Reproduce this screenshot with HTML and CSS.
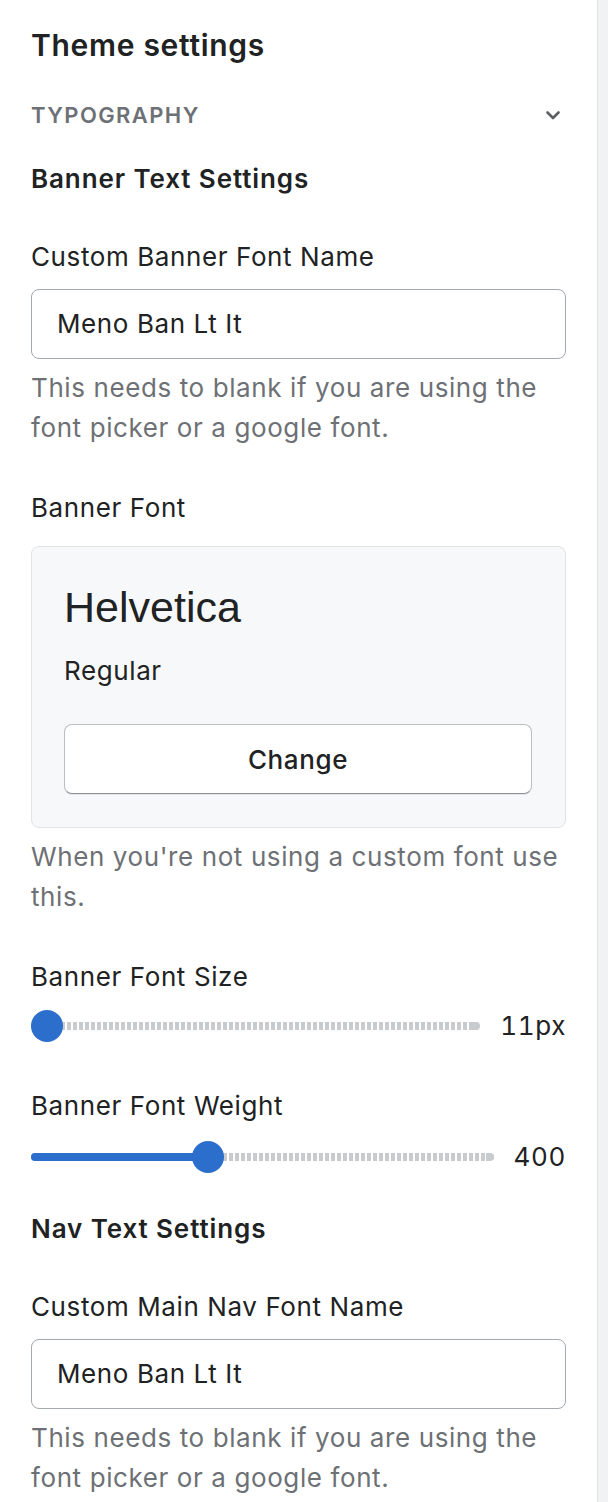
FILE: index.html
```html
<!DOCTYPE html>
<html lang="en">
<head>
<meta charset="utf-8">
<title>Theme settings</title>
<link rel="stylesheet" href="styles.css">
</head>
<body>
<div class="page">
  <aside class="panel">
    <h1 class="title">Theme settings</h1>
    <div class="section-head">
      <span class="section-name">TYPOGRAPHY</span>
      <svg class="chevron" width="20" height="20" viewBox="0 0 20 20" aria-hidden="true">
        <path d="M4.5 7.5 10 13l5.5-5.5" fill="none" stroke="#5c5f62" stroke-width="2.6" stroke-linecap="round" stroke-linejoin="round"/>
      </svg>
    </div>

    <h2 class="group-title">Banner Text Settings</h2>

    <div class="field field-first">
      <label class="label">Custom Banner Font Name</label>
      <div class="input">Meno Ban Lt It</div>
      <p class="help">This needs to blank if you are using the font picker or a google font.</p>
    </div>

    <div class="field">
      <label class="label label-card">Banner Font</label>
      <div class="font-card">
        <div class="font-name">Helvetica</div>
        <div class="font-style">Regular</div>
        <button class="btn">Change</button>
      </div>
      <p class="help">When you're not using a custom font use this.</p>
    </div>

    <div class="field">
      <label class="label">Banner Font Size</label>
      <div class="slider slider-a">
        <div class="range">
          <div class="track"></div>
          <div class="thumb" style="left:0px"></div>
        </div>
        <span class="value">11px</span>
      </div>
    </div>

    <div class="field field-tight">
      <label class="label">Banner Font Weight</label>
      <div class="slider slider-b">
        <div class="range">
          <div class="track"></div>
          <div class="fill" style="width:178px"></div>
          <div class="thumb" style="left:161px"></div>
        </div>
        <span class="value">400</span>
      </div>
    </div>

    <h2 class="group-title group-nav">Nav Text Settings</h2>

    <div class="field field-first">
      <label class="label">Custom Main Nav Font Name</label>
      <div class="input">Meno Ban Lt It</div>
      <p class="help">This needs to blank if you are using the font picker or a google font.</p>
    </div>
  </aside>
  <div class="backdrop"></div>
</div>
</body>
</html>
```

FILE: styles.css
```css
* { box-sizing: border-box; }

html, body {
  margin: 0;
  padding: 0;
  background: #ffffff;
}

body {
  font-family: Inter, "Noto Sans", "Liberation Sans", sans-serif;
  color: #202223;
  font-size: 26px;
  line-height: 40px;
  letter-spacing: 0.6px;
}

.page {
  display: flex;
  width: 608px;
  min-height: 1502px;
}

.panel {
  width: 598px;
  flex: none;
  padding: 25px 31px 0 31px;
  border-right: 1px solid #e1e3e5;
  background: #ffffff;
  overflow: hidden;
}

.backdrop {
  flex: 1;
  background: #f1f2f3;
}

.title {
  margin: 0;
  font-size: 30px;
  line-height: 40px;
  font-weight: 600;
  letter-spacing: 0.7px;
}

.section-head {
  margin-top: 30px;
  height: 40px;
  display: flex;
  align-items: center;
  justify-content: space-between;
}

.section-name {
  font-size: 22px;
  font-weight: 600;
  color: #6d7175;
  letter-spacing: 1.4px;
}

.chevron {
  margin-right: 3px;
}

.group-title {
  margin: 24px 0 0;
  font-size: 26px;
  line-height: 40px;
  font-weight: 600;
  letter-spacing: 0.9px;
}

.group-nav {
  margin-top: 32px;
}

.field {
  margin-top: 40px;
}

.field-first {
  margin-top: 38px;
}

.field-tight {
  margin-top: 40px;
}

.label {
  display: block;
  font-size: 26px;
  line-height: 40px;
}

.input {
  margin-top: 12px;
  height: 70px;
  border: 1px solid #a4a9ae;
  border-radius: 8px;
  padding: 0 25px;
  display: flex;
  align-items: center;
  background: #ffffff;
}

.help {
  margin: 9px 0 0;
  color: #6d7175;
  font-size: 26px;
  line-height: 40px;
}

.label-card + .font-card {
  margin-top: 18px;
}

.font-card {
  border: 1px solid #e1e3e5;
  border-radius: 8px;
  background: #f7f8fa;
  padding: 35px 33px 33px 32px;
}

.font-name {
  font-family: "Liberation Sans", Arial, sans-serif;
  font-size: 43px;
  line-height: 50px;
  letter-spacing: 0;
}

.font-style {
  margin-top: 19px;
  line-height: 40px;
}

.btn {
  display: block;
  width: 100%;
  margin-top: 33px;
  height: 70px;
  border: 1px solid #babfc3;
  border-bottom-color: #8c9196;
  border-radius: 8px;
  background: #ffffff;
  box-shadow: 0 1px 0 rgba(0, 0, 0, 0.08);
  font-family: inherit;
  font-size: 26px;
  font-weight: 500;
  letter-spacing: 0.6px;
  color: #202223;
  padding: 0;
}

.slider {
  margin-top: 9px;
  height: 40px;
  display: flex;
  align-items: center;
}

.slider-b {
  margin-top: 11px;
}

.range {
  flex: 1;
  position: relative;
  height: 32px;
}

.track {
  position: absolute;
  left: 0;
  right: 0;
  top: 12px;
  height: 8px;
  border-radius: 4px;
  background: repeating-linear-gradient(to right, #c9cccf 0 4px, transparent 4px 6px);
}

.track::after {
  content: "";
  position: absolute;
  right: 0;
  top: 0;
  width: 8px;
  height: 8px;
  border-radius: 0 4px 4px 0;
  background: #c9cccf;
}

.fill {
  position: absolute;
  left: 0;
  top: 12px;
  height: 8px;
  border-radius: 4px;
  background: #2c6ecb;
}

.thumb {
  position: absolute;
  top: 0;
  width: 32px;
  height: 32px;
  border-radius: 50%;
  background: #2c6ecb;
}

.value {
  margin-left: 20px;
  font-size: 26px;
  line-height: 40px;
  color: #202223;
  font-variant-numeric: tabular-nums;
}
```
